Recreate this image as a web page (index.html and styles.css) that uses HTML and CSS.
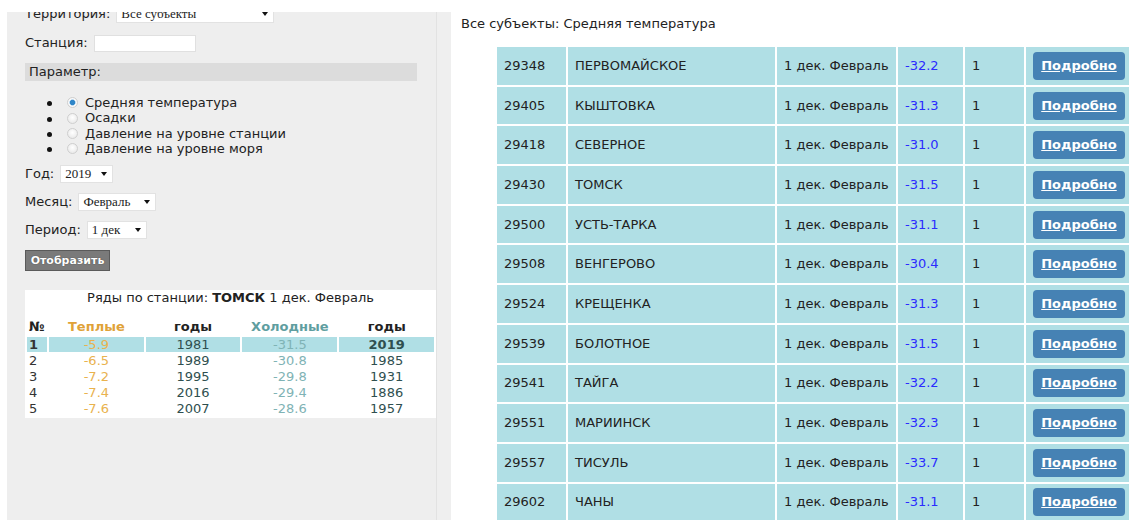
FILE: index.html
```html
<!DOCTYPE html>
<html lang="ru">
<head>
<meta charset="utf-8">
<title>Средняя температура — все субъекты</title>
<link rel="stylesheet" href="styles.css">
</head>
<body>
<div class="topbar"></div>
<div class="page">
  <aside class="sidebar">
    <div class="panel">
      <form class="filters">
        <div class="field field-territory">
          <label>Территория:</label>
          <span class="select select-territory"><select><option>Все субъекты</option></select></span>
        </div>
        <div class="field field-station">
          <label>Станция:</label>
          <input type="text" class="text-input">
        </div>
        <div class="section-title">Параметр:</div>
        <ul class="params">
          <li><label><input type="radio" name="param" checked>Средняя температура</label></li>
          <li><label><input type="radio" name="param">Осадки</label></li>
          <li><label><input type="radio" name="param">Давление на уровне станции</label></li>
          <li><label><input type="radio" name="param">Давление на уровне моря</label></li>
        </ul>
        <div class="field field-year">
          <label>Год:</label>
          <span class="select select-year"><select><option>2019</option></select></span>
        </div>
        <div class="field field-month">
          <label>Месяц:</label>
          <span class="select select-month"><select><option>Февраль</option></select></span>
        </div>
        <div class="field field-period">
          <label>Период:</label>
          <span class="select select-period"><select><option>1 дек</option></select></span>
        </div>
        <button type="button" class="btn-show">Отобразить</button>
      </form>

      <div class="series">
        <p class="series-title">Ряды по станции: <b>ТОМСК</b> 1 дек. Февраль</p>
        <table class="series-table">
          <thead>
            <tr><th class="num">№</th><th class="warm">Теплые</th><th>годы</th><th class="cold">Холодные</th><th>годы</th></tr>
          </thead>
          <tbody>
            <tr class="current"><td class="num"><b>1</b></td><td class="warm">-5.9</td><td>1981</td><td class="cold">-31.5</td><td><b>2019</b></td></tr>
            <tr><td class="num">2</td><td class="warm">-6.5</td><td>1989</td><td class="cold">-30.8</td><td>1985</td></tr>
            <tr><td class="num">3</td><td class="warm">-7.2</td><td>1995</td><td class="cold">-29.8</td><td>1931</td></tr>
            <tr><td class="num">4</td><td class="warm">-7.4</td><td>2016</td><td class="cold">-29.4</td><td>1886</td></tr>
            <tr><td class="num">5</td><td class="warm">-7.6</td><td>2007</td><td class="cold">-28.6</td><td>1957</td></tr>
          </tbody>
        </table>
      </div>
    </div>
  </aside>

  <main class="content">
    <h2 class="content-title">Все субъекты: Средняя температура</h2>
    <table class="stations">
      <colgroup>
        <col class="c-id"><col class="c-name"><col class="c-period"><col class="c-temp"><col class="c-rank"><col class="c-more">
      </colgroup>
      <tbody>
        <tr><td>29348</td><td>ПЕРВОМАЙСКОЕ</td><td>1 дек. Февраль</td><td class="temp">-32.2</td><td>1</td><td><a class="btn-more" href="#">Подробно</a></td></tr>
        <tr><td>29405</td><td>КЫШТОВКА</td><td>1 дек. Февраль</td><td class="temp">-31.3</td><td>1</td><td><a class="btn-more" href="#">Подробно</a></td></tr>
        <tr><td>29418</td><td>СЕВЕРНОЕ</td><td>1 дек. Февраль</td><td class="temp">-31.0</td><td>1</td><td><a class="btn-more" href="#">Подробно</a></td></tr>
        <tr><td>29430</td><td>ТОМСК</td><td>1 дек. Февраль</td><td class="temp">-31.5</td><td>1</td><td><a class="btn-more" href="#">Подробно</a></td></tr>
        <tr><td>29500</td><td>УСТЬ-ТАРКА</td><td>1 дек. Февраль</td><td class="temp">-31.1</td><td>1</td><td><a class="btn-more" href="#">Подробно</a></td></tr>
        <tr><td>29508</td><td>ВЕНГЕРОВО</td><td>1 дек. Февраль</td><td class="temp">-30.4</td><td>1</td><td><a class="btn-more" href="#">Подробно</a></td></tr>
        <tr><td>29524</td><td>КРЕЩЕНКА</td><td>1 дек. Февраль</td><td class="temp">-31.3</td><td>1</td><td><a class="btn-more" href="#">Подробно</a></td></tr>
        <tr><td>29539</td><td>БОЛОТНОЕ</td><td>1 дек. Февраль</td><td class="temp">-31.5</td><td>1</td><td><a class="btn-more" href="#">Подробно</a></td></tr>
        <tr><td>29541</td><td>ТАЙГА</td><td>1 дек. Февраль</td><td class="temp">-32.2</td><td>1</td><td><a class="btn-more" href="#">Подробно</a></td></tr>
        <tr><td>29551</td><td>МАРИИНСК</td><td>1 дек. Февраль</td><td class="temp">-32.3</td><td>1</td><td><a class="btn-more" href="#">Подробно</a></td></tr>
        <tr><td>29557</td><td>ТИСУЛЬ</td><td>1 дек. Февраль</td><td class="temp">-33.7</td><td>1</td><td><a class="btn-more" href="#">Подробно</a></td></tr>
        <tr><td>29602</td><td>ЧАНЫ</td><td>1 дек. Февраль</td><td class="temp">-31.1</td><td>1</td><td><a class="btn-more" href="#">Подробно</a></td></tr>
      </tbody>
    </table>
  </main>
</div>
</body>
</html>
```
FILE: styles.css
```css
* {
  box-sizing: border-box;
}

html, body {
  margin: 0;
  height: 100%;
  overflow: hidden;
  background: #fff;
}

body {
  font-family: "DejaVu Sans", Verdana, sans-serif;
  font-size: 13px;
  line-height: 16px;
  color: #222;
}

.topbar {
  position: fixed;
  top: 0;
  left: 0;
  right: 0;
  height: 12px;
  background: #fff;
  z-index: 10;
}

.page {
  display: flex;
  height: 100%;
  padding-left: 7px;
}

/* ---------- left filter column ---------- */
.sidebar {
  flex: 0 0 444px;
  background: #efefef;
  height: 100%;
}

.panel {
  width: 430px;
  height: 100%;
  background: #eee;
  border-right: 1px solid #e2e2e2;
  padding: 4px 0 0 18px;
}

.filters {
  display: flex;
  flex-direction: column;
  align-items: flex-start;
}

.field {
  display: flex;
  align-items: center;
  gap: 6px;
  height: 18px;
}

.field-territory {
  height: 20px;
  margin-bottom: 10px;
}

.field-station {
  margin-bottom: 11px;
}

.field-year,
.field-month {
  margin-bottom: 10px;
}

.field-period {
  margin-bottom: 11px;
}

.select {
  position: relative;
  display: inline-block;
  height: 18px;
}

.select select {
  appearance: none;
  -webkit-appearance: none;
  height: 18px;
  width: 100%;
  margin: 0;
  padding: 0 0 0 4px;
  border: 1px solid #e2e2e2;
  border-radius: 0;
  background: #fff;
  font-family: "Liberation Serif", "Times New Roman", serif;
  font-size: 13px;
  line-height: 16px;
  color: #222;
}

/* dropdown caret */
.select::after {
  content: "";
  position: absolute;
  right: 6px;
  top: 7px;
  border-left: 3.5px solid transparent;
  border-right: 3.5px solid transparent;
  border-top: 4px solid #111;
  pointer-events: none;
}

.select-territory { width: 158px; }
.select-year { width: 53px; }
.select-month { width: 78px; }
.select-period { width: 60px; }

.text-input {
  width: 102px;
  height: 17px;
  margin: 0;
  border: 1px solid #e0e0e0;
  background: #fff;
  padding: 0 3px;
}

.section-title {
  width: 392px;
  height: 18px;
  line-height: 18px;
  background: #dcdcdc;
  padding-left: 4px;
}

.params {
  margin: 14px 0 8px;
  padding: 0 0 0 38px;
  list-style: disc;
  line-height: 15.4px;
}

.params li::marker {
  font-size: 15px;
  color: #111;
}

.params label {
  display: flex;
  align-items: center;
}

.params input[type="radio"] {
  appearance: none;
  -webkit-appearance: none;
  width: 11px;
  height: 11px;
  margin: 0 7px 0 4px;
  border: 1px solid #cfcfcf;
  border-radius: 50%;
  background: radial-gradient(circle at 50% 40%, #ffffff, #e4e4e4);
}

.params input[type="radio"]:checked {
  background: radial-gradient(circle, #2f86c8 0 2.3px, #9cc6e6 2.8px, #fdfdfd 3.5px, #e8e8e8 100%);
}

.btn-show {
  height: 21px;
  width: 85px;
  padding: 0;
  margin: 0 0 19px;
  border: 1px solid #5a5a5a;
  background: #7a7a7a;
  color: #fff;
  font-family: "DejaVu Sans", Verdana, sans-serif;
  font-size: 11px;
  font-weight: bold;
  text-shadow: 0 0 1px #333;
}

/* station series box */
.series {
  width: 411px;
  background: #fff;
  padding-bottom: 1px;
}

.series-title {
  margin: 0 0 11px;
  text-align: center;
  line-height: 16px;
}

.series-table {
  table-layout: fixed;
  border-collapse: separate;
  border-spacing: 2px 1px;
  margin-left: 0;
}

.series-table th,
.series-table td {
  width: 95px;
  height: 15px;
  padding: 0;
  text-align: center;
  line-height: 15px;
}

.series-table th {
  height: 18px;
  font-weight: bold;
  color: #222;
}

.series-table .num {
  width: 20px;
  text-align: left;
  padding-left: 2px;
}

.series-table td {
  color: #2f4f4f;
}

.series-table td.num {
  color: #333;
}

.series-table th.warm { color: #e0a238; }
.series-table td.warm { color: #e9b24e; }
.series-table th.cold { color: #5f9ea0; }
.series-table td.cold { color: #7fb3b5; }

.series-table tr.current td {
  background: #b0dfe5;
}

/* ---------- right results column ---------- */
.content {
  flex: 1;
  padding-left: 10px;
  min-width: 0;
}

.content-title {
  margin: 16px 0 13px;
  font-size: 13px;
  font-weight: normal;
  line-height: 16px;
}

.stations {
  table-layout: fixed;
  border-collapse: separate;
  border-spacing: 2px;
  margin-left: 34px;
  width: 643px;
}

.c-id { width: 69px; }
.c-name { width: 207px; }
.c-period { width: 119px; }
.c-temp { width: 65px; }
.c-rank { width: 59px; }
.c-more { width: 110px; }

.stations td {
  height: 37.7px;
  padding: 0 0 0 7px;
  background: #b0dfe5;
  white-space: nowrap;
  vertical-align: middle;
}

.stations td.temp {
  color: #2b2bff;
}

.btn-more {
  display: inline-flex;
  align-items: center;
  justify-content: center;
  width: 92px;
  height: 28px;
  border-radius: 4px;
  background: #4682b4;
  color: #fff;
  font-weight: bold;
  text-decoration: underline;
}
```
